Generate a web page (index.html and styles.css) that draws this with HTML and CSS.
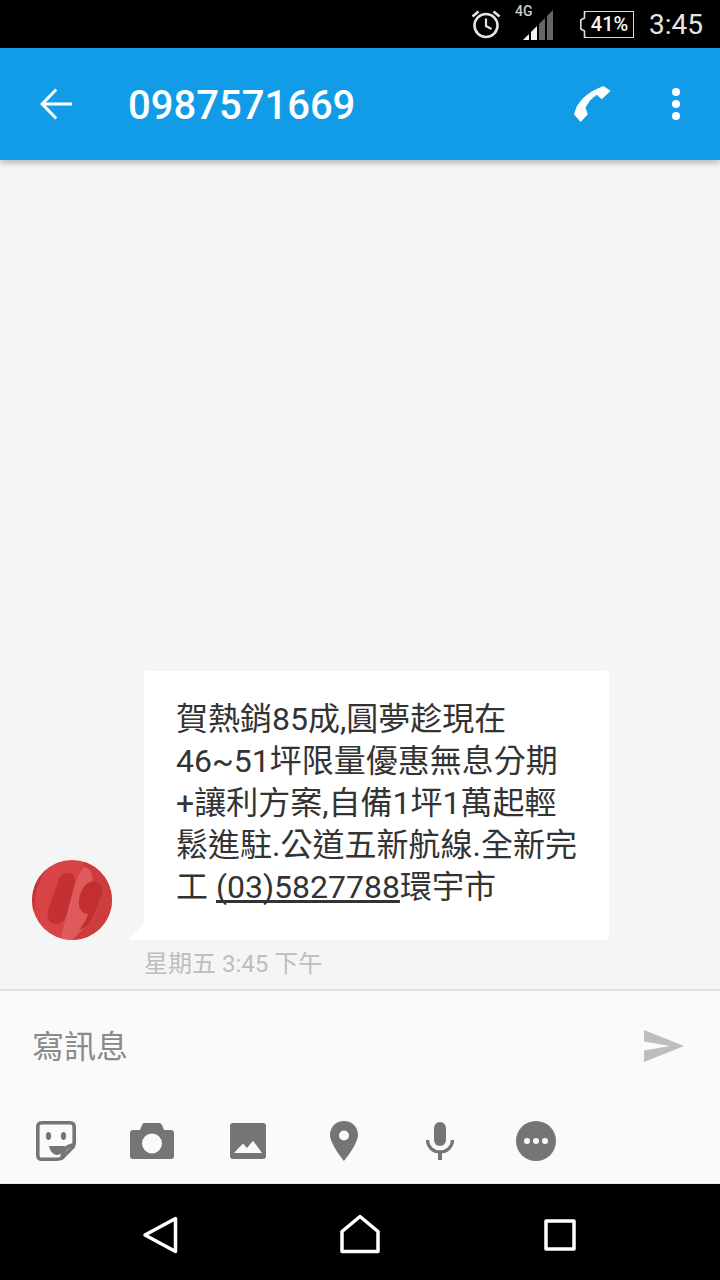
FILE: index.html
```html
<!DOCTYPE html>
<html>
  <head>
    <meta charset="UTF-8" />
    <title>0987571669</title>
    <link rel="stylesheet" href="styles.css">
  </head>
  <body>
    <div class="status-bar">
      <svg class="status-alarm" width="32" height="32" viewBox="0 0 32 32" fill="none" stroke="#e4e4e4" stroke-width="2.6">
        <circle cx="16" cy="17.5" r="11.5" />
        <path d="M16 10.5V18L21.5 21" stroke-width="2.2" />
        <path d="M2.5 8.5L8.5 3.5M29.5 8.5L23.5 3.5" />
      </svg>
      <div class="status-signal">
        <span class="status-net">4G</span>
        <svg width="30" height="30" viewBox="0 0 30 30">
          <polygon points="0,30 6,24 6,30" fill="#f2f2f2" />
          <polygon points="8,30 8,22 14,16 14,30" fill="#f2f2f2" />
          <polygon points="16,30 16,14 22,8 22,30" fill="#666" />
          <polygon points="24,30 24,6 30,0 30,30" fill="#666" />
        </svg>
      </div>
      <div class="status-battery">
        <svg width="6" height="27" viewBox="0 0 6 27" fill="none" stroke="#dcdcdc" stroke-width="1.6">
          <path d="M6 0.8H4.500V7L0.800 9V18L4.500 20V26.200H6" />
        </svg>
        <span class="battery-body">41%</span>
      </div>
      <span class="status-time">3:45</span>
    </div>

    <div class="app-bar">
      <svg width="48" height="48" viewBox="0 0 24 24" fill="#fff">
        <path d="M20 11.2H6.900l5.700-5.900-1-1.100L4 12l7.600 7.800 1-1.100-5.700-5.900H20z" />
      </svg>
      <div class="app-title">0987571669</div>
      <svg class="app-call" width="37" height="36" viewBox="0 0 37 36" fill="#fff" stroke="#fff" stroke-width="1" stroke-linejoin="round">
        <path d="M29.300 0.500L36 5L27.700 12.700L22.700 8.300Q15 13 11 21.700L13.300 28.300L6.700 35.500L0.500 28.300Q4 10 29.300 0.500Z" />
      </svg>
      <svg width="12" height="32" viewBox="0 0 12 32" fill="#fff">
        <circle cx="6" cy="4" r="4" />
        <circle cx="6" cy="16" r="4" />
        <circle cx="6" cy="28" r="4" />
      </svg>
    </div>

    <div class="thread">
      <div class="message-row">
        <svg class="avatar" width="80" height="80" viewBox="0 0 80 80">
          <clipPath id="avatarClip">
            <circle cx="40" cy="40" r="40" />
          </clipPath>
          <g clip-path="url(#avatarClip)">
            <rect width="80" height="80" fill="#d64446" />
            <path d="M0 40C0 25 6 14 16 7C8 18 3 30 3 42C3 46 2 50 2 54C0 50 0 45 0 40Z" fill="#c83436" />
            <path d="M52 0H80V80H40L52 60Z" fill="#cd3c3e" />
            <path d="M52 7C58 8 62 14 60 22L70 30L62 58L48 72L40 80H28C30 72 33 62 35 52C37 42 40 34 42 28C44 20 48 12 52 7Z" fill="#df5a5c" />
            <path d="M33 13C40 12 44 16 43 22L35 54C33 63 25 66 20 63C15 60 15 54 16 50L26 22C27 17 29 14 33 13Z" fill="#c43133" />
            <path d="M58 22C66 20 72 26 70 33L63 53C60 62 54 68 47 70C52 64 55 58 56 54C50 54 46 48 47 40C48 32 52 24 58 22Z" fill="#c22f31" />
          </g>
        </svg>
        <div class="bubble-wrap">
          <div class="bubble">賀熱銷85成,圓夢趁現在<br>46~51坪限量優惠無息分期<br>+讓利方案,自備1坪1萬起輕<br>鬆進駐.公道五新航線.全新完<br>工 <span class="bubble-link">(03)5827788</span>環宇市</div>
          <div class="bubble-time">星期五 3:45 下午</div>
        </div>
      </div>
    </div>

    <div class="compose">
      <div class="compose-input">
        <span class="compose-hint">寫訊息</span>
        <svg class="compose-send" width="40" height="32" viewBox="0 0 40 32" fill="#bdbdbd">
          <path d="M0 0L40 16L0 32V20.500L26 16L0 11.500Z" />
        </svg>
      </div>
      <div class="compose-tools">
        <div class="tool">
          <svg width="40" height="40" viewBox="0 0 40 40" fill="none" stroke="#757575" stroke-width="3.600">
            <path d="M6 1.800H34Q38.200 1.800 38.200 6V22Q38.200 24 37 26L26 37Q24 38.200 21 38.200H6Q1.800 38.200 1.800 34V6Q1.800 1.800 6 1.800Z" />
            <path d="M38 24C31 24 26 30 26 38" />
            <ellipse cx="12.500" cy="15" rx="2.600" ry="4" fill="#757575" stroke="none" />
            <ellipse cx="27.500" cy="15" rx="2.600" ry="4" fill="#757575" stroke="none" />
            <path d="M13 25H29C28 31 24 34 21 34C18 34 14 31 13 25Z" fill="#757575" stroke="none" />
          </svg>
        </div>
        <div class="tool">
          <svg width="44" height="36" viewBox="0 0 44 36">
            <path d="M14 0H29Q31 0 32 2L34 7H41Q44 7 44 10V33Q44 36 41 36H3Q0 36 0 33V10Q0 7 3 7H10L12 2Q13 0 14 0Z" fill="#757575" />
            <circle cx="22" cy="20.500" r="10" fill="#fafafa" />
          </svg>
        </div>
        <div class="tool">
          <svg width="36" height="36" viewBox="0 0 36 36">
            <rect width="36" height="36" rx="3" fill="#757575" />
            <path d="M4 30L13 20.500L17 25L23 17.700L32 30Z" fill="#fafafa" />
          </svg>
        </div>
        <div class="tool">
          <svg width="28" height="40" viewBox="0 0 28 40">
            <path fill-rule="evenodd" d="M14 0C22 0 28 6 28 14C28 23 14 40 14 40C14 40 0 23 0 14C0 6 6 0 14 0ZM14 9.500A5 5 0 1 0 14 19.500A5 5 0 1 0 14 9.500Z" fill="#757575" />
          </svg>
        </div>
        <div class="tool">
          <svg width="28" height="38" viewBox="0 0 28 38">
            <rect x="8" y="0" width="12" height="24" rx="6" fill="#757575" />
            <path d="M1.500 18C1.500 25 7 30 14 30C21 30 26.500 25 26.500 18" fill="none" stroke="#757575" stroke-width="3.400" />
            <rect x="12" y="30" width="4" height="8" fill="#757575" />
          </svg>
        </div>
        <div class="tool">
          <svg width="40" height="40" viewBox="0 0 40 40">
            <circle cx="20" cy="20" r="20" fill="#757575" />
            <circle cx="11" cy="20" r="3" fill="#fafafa" />
            <circle cx="20" cy="20" r="3" fill="#fafafa" />
            <circle cx="29" cy="20" r="3" fill="#fafafa" />
          </svg>
        </div>
      </div>
    </div>

    <div class="nav-bar">
      <div class="nav-item">
        <svg width="36" height="38" viewBox="0 0 36 38" fill="none" stroke="#fff" stroke-width="3.500" stroke-linejoin="round">
          <path d="M33.500 2.500V35.500L3 19Z" />
        </svg>
      </div>
      <div class="nav-item">
        <svg width="40" height="40" viewBox="0 0 40 40" fill="none" stroke="#fff" stroke-width="3.500" stroke-linejoin="round">
          <path d="M2 36.500V16.500L20 1.500L38 16.500V36.500Z" />
        </svg>
      </div>
      <div class="nav-item">
        <svg width="32" height="32" viewBox="0 0 32 32" fill="none" stroke="#fff" stroke-width="3.500" stroke-linejoin="round">
          <rect x="2" y="2" width="28" height="28" />
        </svg>
      </div>
    </div>
  </body>
</html>
```

FILE: styles.css
```css
* {
  margin: 0;
  padding: 0;
  box-sizing: border-box;
}

body {
  width: 720px;
  height: 1280px;
  display: flex;
  flex-direction: column;
  overflow: hidden;
  font-family: Roboto, "Noto Sans CJK TC", sans-serif;
  background-color: #f5f5f5;
}

svg {
  display: block;
  flex-shrink: 0;
}

/* Status bar */
.status-bar {
  height: 48px;
  flex-shrink: 0;
  display: flex;
  align-items: center;
  background-color: #000;
  color: #e4e4e4;
  padding-left: 470px;
}

.status-signal {
  position: relative;
  margin-left: 21px;
  margin-top: 2px;
}

.status-net {
  position: absolute;
  left: -8px;
  top: -7px;
  font-size: 14px;
  font-weight: 500;
  color: #ccc;
}

.status-battery {
  display: flex;
  align-items: center;
  margin-left: 27px;
  margin-top: 1px;
}

.battery-body {
  width: 48px;
  height: 27px;
  border: 1.6px solid #dcdcdc;
  border-left: none;
  font-size: 20px;
  font-weight: 500;
  line-height: 24px;
  text-align: center;
  color: #f4f4f4;
}

.status-time {
  margin-left: 15px;
  font-size: 28px;
}

/* App bar */
.app-bar {
  height: 112px;
  flex-shrink: 0;
  display: flex;
  align-items: center;
  padding: 0 38px 0 32px;
  background-color: #129ce8;
  box-shadow: 0 3px 6px rgba(0, 0, 0, 0.25);
  position: relative;
}

.app-title {
  flex: 1;
  margin-left: 48px;
  margin-top: 3px;
  font-size: 40px;
  font-weight: 500;
  color: #fff;
}

.app-call {
  margin-right: 59px;
}

/* Thread */
.thread {
  flex: 1;
  display: flex;
  flex-direction: column;
  justify-content: flex-end;
  padding: 0 0 8px 32px;
  background-color: #f5f5f5;
}

.message-row {
  display: flex;
  align-items: flex-start;
}

.avatar {
  margin-top: 189px;
}

.bubble-wrap {
  margin-left: 32px;
}

.bubble {
  position: relative;
  width: 465px;
  height: 269px;
  padding: 27px 20px 0 32px;
  background-color: #fff;
  border-radius: 3px 3px 3px 0;
  font-size: 32px;
  line-height: 42px;
  color: #333;
  white-space: nowrap;
}

.bubble::before {
  content: "";
  position: absolute;
  left: -16px;
  bottom: 0;
  border-style: solid;
  border-width: 0 0 16px 16px;
  border-color: transparent transparent #fff transparent;
}

.bubble-link {
  text-decoration: underline;
  text-decoration-skip-ink: none;
}

.bubble-time {
  margin-top: 7px;
  font-size: 24px;
  line-height: 34px;
  color: #bdbdbd;
}

/* Compose */
.compose {
  height: 195px;
  flex-shrink: 0;
  background-color: #fafafa;
  border-top: 2px solid #e0e0e0;
  border-bottom: 1px solid #e8e8e8;
}

.compose-input {
  height: 108px;
  display: flex;
  align-items: center;
  justify-content: space-between;
  padding: 0 36px 0 32px;
}

.compose-hint {
  font-size: 32px;
  color: #8a8a8a;
  margin-top: -2px;
}

.compose-send {
  margin-top: 2px;
}

.compose-tools {
  display: flex;
  padding-left: 8px;
  margin-top: 22px;
}

.tool {
  width: 96px;
  height: 40px;
  display: flex;
  align-items: center;
  justify-content: center;
}

/* Nav bar */
.nav-bar {
  height: 96px;
  flex-shrink: 0;
  display: flex;
  align-items: center;
  padding: 6px 60px 0;
  background-color: #000;
}

.nav-item {
  width: 200px;
  display: flex;
  justify-content: center;
}
```
